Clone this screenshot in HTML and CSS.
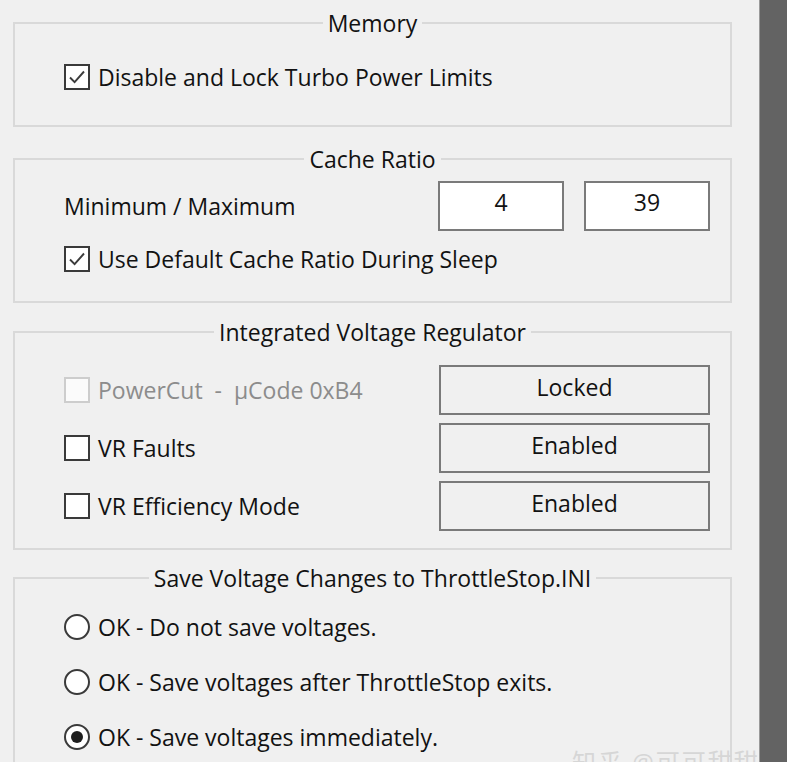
FILE: index.html
```html
<!DOCTYPE html>
<html lang="en">
<head>
<meta charset="utf-8">
<title>ThrottleStop Options</title>
<link rel="stylesheet" href="styles.css">
</head>
<body>
<div class="window">
  <div class="panel">
    <fieldset class="group">
      <legend>Memory</legend>
      <div class="body g-memory">
        <div class="row">
          <span class="box"><svg viewBox="0 0 22 22"><path d="M4 11.5 L8.6 16.2 L18 5.5"/></svg></span>
          <span class="label">Disable and Lock Turbo Power Limits</span>
        </div>
      </div>
    </fieldset>

    <fieldset class="group">
      <legend>Cache Ratio</legend>
      <div class="body g-cache">
        <div class="row row-fields">
          <span class="label">Minimum / Maximum</span>
          <div class="fields">
            <div class="field">4</div>
            <div class="field">39</div>
          </div>
        </div>
        <div class="row row-sleep">
          <span class="box"><svg viewBox="0 0 22 22"><path d="M4 11.5 L8.6 16.2 L18 5.5"/></svg></span>
          <span class="label">Use Default Cache Ratio During Sleep</span>
        </div>
      </div>
    </fieldset>

    <fieldset class="group">
      <legend>Integrated Voltage Regulator</legend>
      <div class="body g-ivr">
        <div class="row row-btn">
          <div class="opt disabled">
            <span class="box"></span>
            <span class="label">PowerCut&nbsp; - &nbsp;µCode 0xB4</span>
          </div>
          <div class="button">Locked</div>
        </div>
        <div class="row row-btn">
          <div class="opt">
            <span class="box"></span>
            <span class="label">VR Faults</span>
          </div>
          <div class="button">Enabled</div>
        </div>
        <div class="row row-btn">
          <div class="opt">
            <span class="box"></span>
            <span class="label">VR Efficiency Mode</span>
          </div>
          <div class="button">Enabled</div>
        </div>
      </div>
    </fieldset>

    <fieldset class="group g-last">
      <legend>Save Voltage Changes to ThrottleStop.INI</legend>
      <div class="body g-save">
        <div class="row row-radio">
          <span class="radio"></span>
          <span class="label">OK - Do not save voltages.</span>
        </div>
        <div class="row row-radio">
          <span class="radio"></span>
          <span class="label">OK - Save voltages after ThrottleStop exits.</span>
        </div>
        <div class="row row-radio">
          <span class="radio on"></span>
          <span class="label">OK - Save voltages immediately.</span>
        </div>
      </div>
    </fieldset>
  </div>
  <div class="sidebar"></div>
  <div class="watermark">知乎 @可可甜甜</div>
</div>
</body>
</html>
```

FILE: styles.css
```css
html, body {
  margin: 0;
  padding: 0;
  height: 100%;
  overflow: hidden;
  background: #f0f0f0;
}

.window {
  position: relative;
  display: flex;
  height: 762px;
  overflow: hidden;
  font-family: "Open Sans", "Noto Sans", "Noto Sans CJK SC", sans-serif;
  font-size: 23px;
  color: #121212;
}

.panel {
  width: 746px;
  padding: 9px 0 0 13px;
  display: flex;
  flex-direction: column;
}

.sidebar {
  flex: 1;
  background: #636363;
  border-left: 1px solid #9a9a9a;
}

.group {
  width: 719px;
  box-sizing: border-box;
  margin: 0 0 15px 0;
  border: 2px solid #d9d9d9;
  padding: 0;
  min-width: 0;
}

.group legend {
  margin: 0 auto;
  padding: 0 5px;
  line-height: 28px;
  height: 28px;
}

.body {
  padding: 0 20px 0 49px;
}

.g-memory { padding-top: 26px; padding-bottom: 34px; }
.g-cache  { padding-top: 8px;  padding-bottom: 28px; }
.g-ivr    { padding-top: 19px; padding-bottom: 17px; }
.g-save   { padding-top: 21px; }

.group:first-child { margin-bottom: 18px; }
.group:nth-child(3) { margin-bottom: 14px; }
.g-last { flex: 1; border-bottom: none; margin-bottom: 0; }

.row {
  display: flex;
  align-items: center;
  height: 28px;
  line-height: 28px;
}

.box {
  width: 22px;
  height: 22px;
  border: 2px solid #3a3a3a;
  background: #ffffff;
  margin-right: 8px;
  flex: none;
}

.box svg {
  display: block;
  width: 22px;
  height: 22px;
}

.box svg path {
  fill: none;
  stroke: #3c3c3c;
  stroke-width: 1.9;
}

.label {
  white-space: nowrap;
}

.row-fields {
  height: 50px;
  justify-content: space-between;
}

.fields {
  display: flex;
  gap: 20px;
}

.field {
  width: 122px;
  height: 41px;
  padding-top: 5px;
  border: 2px solid #7a7a7a;
  background: #ffffff;
  text-align: center;
  line-height: 28px;
}

.row-sleep { margin-top: 14px; }

.row-btn {
  height: 50px;
  justify-content: space-between;
}

.row-btn + .row-btn { margin-top: 8px; }

.opt {
  display: flex;
  align-items: center;
}

.opt.disabled .box {
  border-color: #cdcdcd;
  background: #fbfbfb;
}

.opt.disabled .label {
  color: #8c8c8c;
}

.button {
  width: 267px;
  height: 40px;
  padding-top: 6px;
  border: 2px solid #7a7a7a;
  background: #f0f0f0;
  text-align: center;
  line-height: 28px;
}

.row-radio + .row-radio { margin-top: 27px; }

.radio {
  width: 22px;
  height: 22px;
  border: 2px solid #3a3a3a;
  border-radius: 50%;
  background: #ffffff;
  margin-right: 8px;
  flex: none;
  display: flex;
  align-items: center;
  justify-content: center;
}

.radio.on::after {
  content: "";
  width: 12px;
  height: 12px;
  border-radius: 50%;
  background: #1e1e1e;
}

.watermark {
  position: absolute;
  left: 572px;
  top: 747px;
  font-size: 24px;
  letter-spacing: 2px;
  line-height: 30px;
  color: #d6d6d6;
  white-space: nowrap;
}
```
